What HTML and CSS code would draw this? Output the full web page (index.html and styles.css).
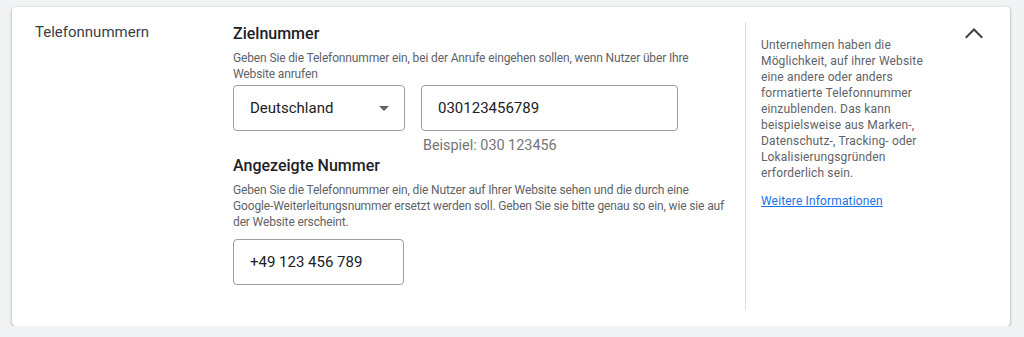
FILE: index.html
```html
<!doctype html>
<html lang="de">
<head>
  <meta charset="utf-8">
  <meta name="viewport" content="width=device-width, initial-scale=1">
  <title>Telefonnummern</title>
  <link rel="stylesheet" href="styles.css">
</head>
<body>
  <section class="panel">
    <div class="panel-label">Telefonnummern</div>

    <div class="panel-main">
      <h2 class="field-title">Zielnummer</h2>
      <p class="field-help">Geben Sie die Telefonnummer ein, bei der Anrufe eingehen sollen, wenn Nutzer über Ihre Website anrufen</p>
      <div class="field-row">
        <div class="outlined country">
          <span>Deutschland</span>
          <svg class="dropdown-icon" viewBox="0 0 10 5" aria-hidden="true"><path d="M0 0l5 5 5-5z" /></svg>
        </div>
        <div class="field-col">
          <div class="outlined phone">030123456789</div>
          <div class="field-hint">Beispiel: 030 123456</div>
        </div>
      </div>

      <h2 class="field-title">Angezeigte Nummer</h2>
      <p class="field-help">Geben Sie die Telefonnummer ein, die Nutzer auf Ihrer Website sehen und die durch eine Google-Weiterleitungsnummer ersetzt werden soll. Geben Sie sie bitte genau so ein, wie sie auf der Website erscheint.</p>
      <div class="outlined display-number">+49 123 456 789</div>
    </div>

    <aside class="panel-aside">
      <p>Unternehmen haben die Möglichkeit, auf ihrer Website eine andere oder anders formatierte Telefonnummer einzublenden. Das kann beispielsweise aus Marken-, Datenschutz-, Tracking- oder Lokalisierungsgründen erforderlich sein.</p>
      <a href="#">Weitere Informationen</a>
    </aside>

    <button class="collapse" type="button" aria-label="Einklappen">
      <svg viewBox="0 0 24 24" aria-hidden="true"><path d="M6.5 14.5L12 9l5.5 5.5" /></svg>
    </button>
  </section>
</body>
</html>
```

FILE: styles.css
```css
:root {
  --page-bg: #f1f3f4;
  --card-bg: #fff;
  --text: #202124;
  --text-label: #3c4043;
  --text-muted: #5f6368;
  --text-hint: #757575;
  --outline: #9e9e9e;
  --divider: #dadce0;
  --link: #1a73e8;
}

* {
  box-sizing: border-box;
}

body {
  margin: 0;
  background: var(--page-bg);
  color: var(--text);
  font: 14px/20px Roboto, "Liberation Sans", Arial, sans-serif;
}

.panel {
  display: flex;
  width: 998px;
  height: 319px;
  margin: 7px 0 0 12px;
  padding: 15px 18px 16px 23px;
  background: var(--card-bg);
  border-radius: 4px;
  box-shadow: 0 1px 2px rgba(60, 64, 67, .3), 0 1px 3px 1px rgba(60, 64, 67, .15);
}

.panel-label {
  width: 198px;
  flex: none;
  font-size: 15px;
  color: var(--text-label);
}

.panel-main {
  width: 494px;
  flex: none;
  margin-right: 18px;
}

.field-title {
  margin: 0;
  font-size: 16px;
  line-height: 24px;
  font-weight: 500;
  color: var(--text);
}

.field-help {
  margin: 4px 0 0;
  font-size: 12px;
  line-height: 16px;
  letter-spacing: -0.14px;
  color: var(--text-muted);
}

.field-row {
  display: flex;
  gap: 16px;
  margin-top: 3px;
}

.outlined {
  display: flex;
  align-items: center;
  height: 46px;
  padding: 0 16px;
  border: 1px solid var(--outline);
  border-radius: 4px;
  font-size: 15px;
  color: var(--text);
}

.country {
  width: 172px;
  justify-content: space-between;
  padding-right: 15px;
}

.dropdown-icon {
  width: 10px;
  height: 5px;
  fill: var(--text-muted);
}

.phone {
  width: 257px;
}

.field-hint {
  margin: 7px 0 0 2px;
  font-size: 14.4px;
  line-height: 16px;
  color: var(--text-hint);
}

.display-number {
  width: 171px;
  margin-top: 9px;
}

.panel-aside {
  width: 192px;
  flex: none;
  padding: 15px 0 0 15px;
  border-left: 1px solid var(--divider);
  font-size: 12px;
  line-height: 16px;
  letter-spacing: 0.15px;
  color: var(--text-muted);
}

.panel-aside p {
  margin: 0;
}

.panel-aside a {
  display: inline-block;
  margin-top: 12px;
  color: var(--link);
}

.collapse {
  width: 36px;
  height: 36px;
  margin: -6px 0 0 auto;
  padding: 0;
  border: 0;
  background: none;
  color: var(--text-label);
  cursor: pointer;
}

.collapse svg {
  display: block;
  width: 36px;
  height: 36px;
  fill: none;
  stroke: currentColor;
  stroke-width: 1.3;
}
```
